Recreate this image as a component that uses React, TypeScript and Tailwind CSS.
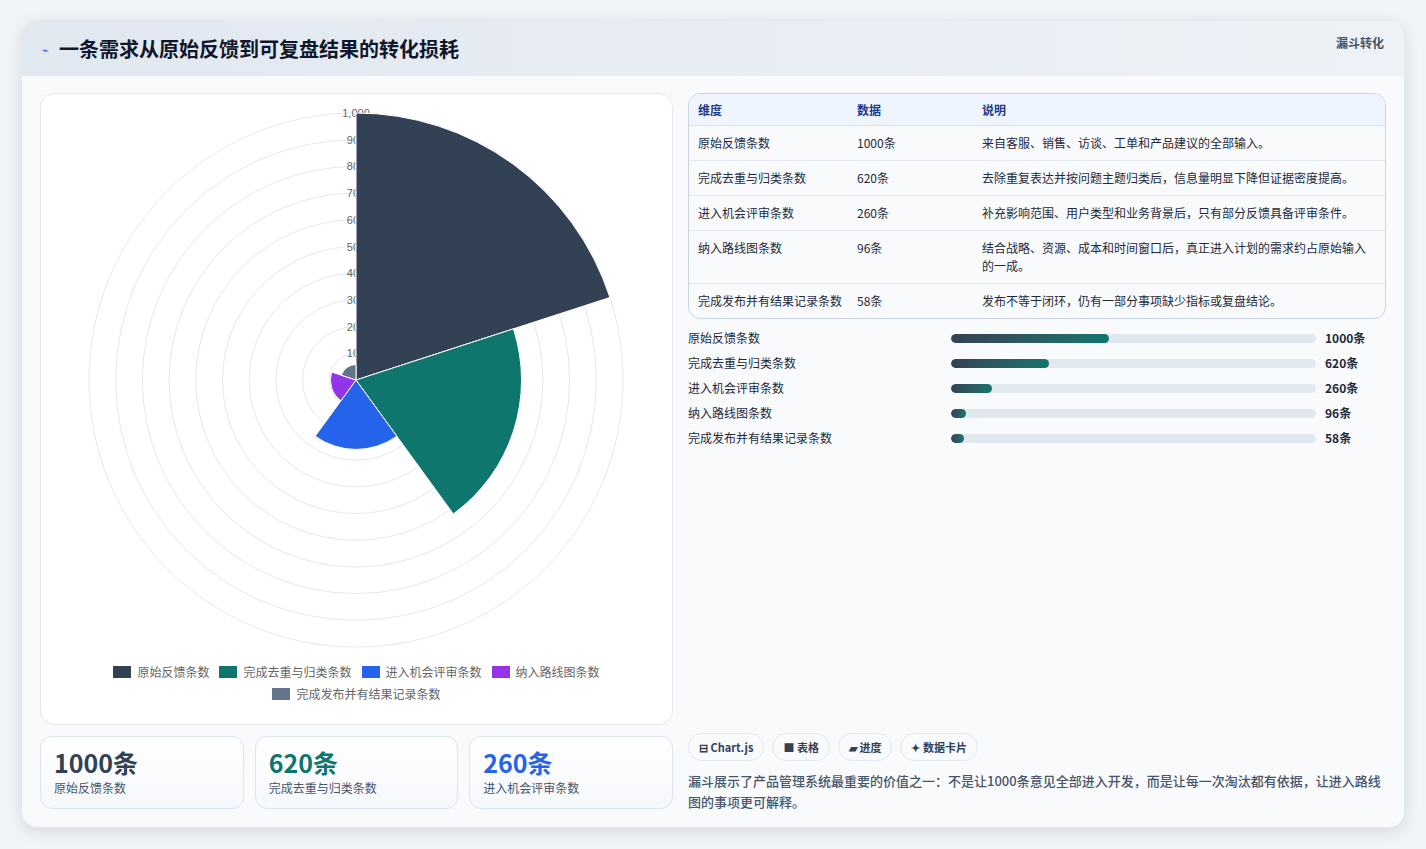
import React from "react";

const C = 355, Rm = 267;
const segs = [
  { v: 1000, c: "#334155", n: "原始反馈条数" },
  { v: 620, c: "#0f766e", n: "完成去重与归类条数" },
  { v: 260, c: "#2563eb", n: "进入机会评审条数" },
  { v: 96, c: "#9333ea", n: "纳入路线图条数" },
  { v: 58, c: "#64748b", n: "完成发布并有结果记录条数" },
];
const rows = [
  ["原始反馈条数", "1000条", "来自客服、销售、访谈、工单和产品建议的全部输入。"],
  ["完成去重与归类条数", "620条", "去除重复表达并按问题主题归类后，信息量明显下降但证据密度提高。"],
  ["进入机会评审条数", "260条", "补充影响范围、用户类型和业务背景后，只有部分反馈具备评审条件。"],
  ["纳入路线图条数", "96条", "结合战略、资源、成本和时间窗口后，真正进入计划的需求约占原始输入的一成。"],
  ["完成发布并有结果记录条数", "58条", "发布不等于闭环，仍有一部分事项缺少指标或复盘结论。"],
];

function arc(r: number, a0: number, a1: number) {
  const rad = (a: number) => (a * Math.PI) / 180;
  const x0 = C + r * Math.cos(rad(a0)), y0 = 280 + r * Math.sin(rad(a0));
  const x1 = C + r * Math.cos(rad(a1)), y1 = 280 + r * Math.sin(rad(a1));
  return `M${C} 280 L${x0} ${y0} A${r} ${r} 0 0 1 ${x1} ${y1} Z`;
}

function Chart() {
  return (
    <svg width="632" height="560" className="block">
      <g transform="translate(-40,6)">
        {[1, 2, 3, 4, 5, 6, 7, 8, 9, 10].map((i) => (
          <circle key={i} cx={C} cy={280} r={(Rm * i) / 10} fill="none" stroke="#e5e7eb" strokeWidth="1" />
        ))}
        {[1, 2, 3, 4, 5, 6, 7, 8, 9, 10].map((i) => (
          <text key={i} x={C} y={280 - (Rm * i) / 10 + 4} textAnchor="middle" fontSize="11" fill="#666" fontFamily="Liberation Sans, sans-serif">
            {i === 10 ? "1,000" : i * 100}
          </text>
        ))}
        {segs.map((s, i) => (
          <path key={i} d={arc((Rm * s.v) / 1000, -90 + i * 72, -18 + i * 72)} fill={s.c} stroke="#fff" strokeWidth="1" />
        ))}
      </g>
    </svg>
  );
}

export default function App() {
  const font = { fontFamily: "'Noto Sans CJK SC', 'Noto Sans', sans-serif" };
  return (
    <div className="w-[1426px] h-[849px] bg-[#f1f5f9] pt-[20px] pl-[21px]" style={font}>
      <div className="w-[1384px] h-[808px] bg-[#f8fafc] rounded-[16px] border border-[#e2e8f0] shadow-[0_4px_16px_rgba(15,23,42,0.12)] overflow-hidden flex flex-col">
        <div className="h-[55px] shrink-0 bg-gradient-to-r from-[#e2e8f0] to-[#eef2f7] flex items-start justify-between px-[20px]">
          <div className="flex items-center gap-[10px] mt-[13px]">
            <span className="text-[11px] text-[#2563eb]">⌁</span>
            <span className="text-[20px] font-bold text-[#0f172a]">一条需求从原始反馈到可复盘结果的转化损耗</span>
          </div>
          <span className="mt-[13px] text-[12px] font-bold text-[#475569]">漏斗转化</span>
        </div>
        <div className="flex gap-[15px] px-[18px] pt-[17px]">
          <div className="w-[633px] flex flex-col gap-[11px]">
            <div className="h-[632px] bg-white rounded-[14px] border border-[#e2e8f0] flex flex-col items-center">
              <Chart />
              <div className="flex flex-wrap justify-center gap-x-[10px] gap-y-[4px] w-[520px] mt-[9px] text-[12px] text-[#666]">
                {segs.map((s) => (
                  <div key={s.n} className="flex items-center gap-[6px] leading-[18px]">
                    <span className="w-[18px] h-[12px]" style={{ background: s.c }} />
                    {s.n}
                  </div>
                ))}
              </div>
            </div>
            <div className="grid grid-cols-3 gap-[11px]">
              {[["1000条", "原始反馈条数", "#334155"], ["620条", "完成去重与归类条数", "#0f766e"], ["260条", "进入机会评审条数", "#2563eb"]].map(([v, l, c]) => (
                <div key={l} className="h-[73px] rounded-[12px] border border-[#dbe4f0] bg-gradient-to-b from-white to-[#f5f8fc] px-[13px] pt-[9px]">
                  <div className="text-[25px] font-bold leading-[32px]" style={{ color: c }}>{v}</div>
                  <div className="text-[12px] text-[#475569] mt-[1px]">{l}</div>
                </div>
              ))}
            </div>
          </div>
          <div className="w-[700px] flex flex-col">
            <div className="rounded-[12px] border border-[#cbd5e1] overflow-hidden bg-[#f8fafc] text-[12px] text-[#1e293b]">
              <div className="flex h-[32px] items-center bg-[#eef5ff] font-bold text-[#1e3a8a] border-b border-[#dbe4f0]">
                <div className="w-[168px] pl-[9px]">维度</div><div className="w-[125px]">数据</div><div>说明</div>
              </div>
              {rows.map((r, i) => (
                <div key={i} className={`flex py-[8px] leading-[18px] ${i < 4 ? "border-b border-[#e2e8f0]" : ""}`}>
                  <div className="w-[168px] pl-[9px] shrink-0">{r[0]}</div>
                  <div className="w-[125px] shrink-0">{r[1]}</div>
                  <div className="pr-[8px]">{r[2]}</div>
                </div>
              ))}
            </div>
            <div className="flex flex-col gap-[7px] mt-[10px] text-[12px] text-[#1e293b]">
              {segs.map((s) => (
                <div key={s.n} className="flex items-center h-[18px]">
                  <div className="w-[263px]">{s.n}</div>
                  <div className="w-[365px] h-[9px] rounded-full bg-[#e2e8f0] overflow-hidden">
                    <div className="h-full rounded-full bg-gradient-to-r from-[#334155] to-[#0f766e]" style={{ width: `${s.v * 0.0434}%`, minWidth: 13 }} />
                  </div>
                  <div className="ml-[9px] font-bold">{s.v}条</div>
                </div>
              ))}
            </div>
            <div className="flex gap-[8px] mt-[286px] text-[11px] text-[#334155] font-bold">
              {["⊟ Chart.js", "■ 表格", "▰ 进度", "✦ 数据卡片"].map((t) => (
                <span key={t} className="h-[28px] px-[10px] rounded-full border border-[#e2e8f0] bg-[#f8fafc] flex items-center">{t}</span>
              ))}
            </div>
            <p className="mt-[9px] text-[13px] leading-[21px] text-[#475569] font-medium">
              漏斗展示了产品管理系统最重要的价值之一：不是让1000条意见全部进入开发，而是让每一次淘汰都有依据，让进入路线图的事项更可解释。
            </p>
          </div>
        </div>
      </div>
    </div>
  );
}
